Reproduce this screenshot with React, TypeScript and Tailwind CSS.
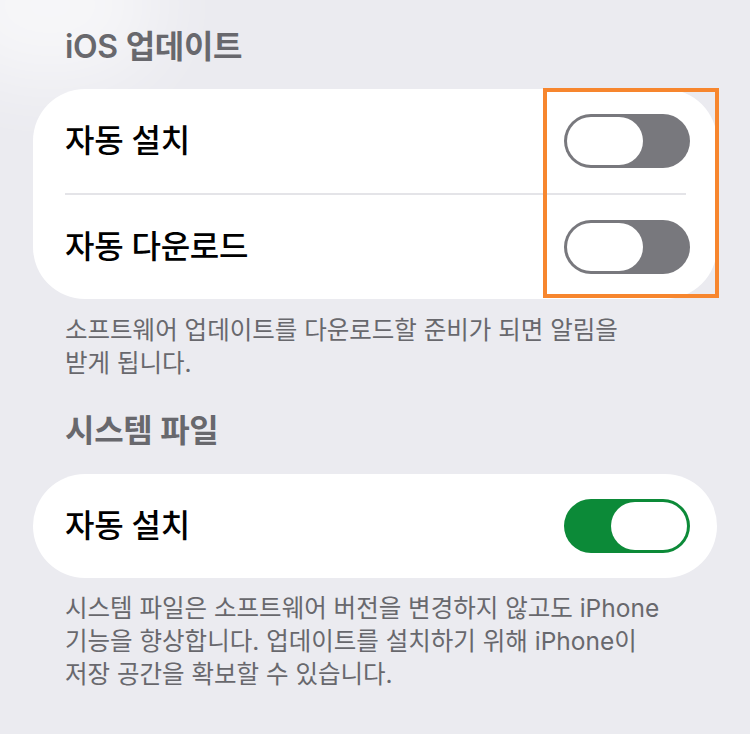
import React from 'react';

function Toggle({ on }: { on: boolean }) {
  return (
    <div
      className={`w-[126px] h-[54px] rounded-full p-[3px] flex ${on ? 'bg-[#0c8a38] justify-end' : 'bg-[#78787d] justify-start'}`}
    >
      <div className="w-[76px] h-full rounded-full bg-white" />
    </div>
  );
}

function Row({ label, on }: { label: string; on: boolean }) {
  return (
    <div className="h-[104px] flex items-center justify-between pl-[32px] pr-[27px]">
      <span className="text-[32px] font-medium text-black tracking-[-0.3px]">{label}</span>
      <Toggle on={on} />
    </div>
  );
}

export default function App() {
  return (
    <div className="relative min-h-[734px] w-[750px] overflow-hidden bg-[#ebebf0] font-['Inter','Noto_Sans_CJK_KR',sans-serif]">
      <div className="absolute -left-[60px] -top-[70px] w-[220px] h-[150px] rounded-full bg-white/60 blur-2xl" />

      <div className="relative px-[33px] pt-[27px] pb-[40px]">
        <h2 className="px-[32px] text-[32px] leading-[40px] font-semibold text-[#68686d] tracking-[-0.3px]">iOS 업데이트</h2>

        <div className="mt-[22px] bg-white rounded-[52px]">
          <Row label="자동 설치" on={false} />
          <div className="ml-[32px] mr-[31px] h-[2px] bg-[#e4e4e8]" />
          <Row label="자동 다운로드" on={false} />
        </div>

        <p className="mt-[15px] px-[32px] text-[24.5px] leading-[33px] text-[#68686d]">
          소프트웨어 업데이트를 다운로드할 준비가 되면 알림을
          <br />
          받게 됩니다.
        </p>

        <h2 className="mt-[31px] px-[32px] text-[32px] leading-[40px] font-semibold text-[#68686d] tracking-[-0.3px]">시스템 파일</h2>

        <div className="mt-[23px] bg-white rounded-[52px]">
          <Row label="자동 설치" on={true} />
        </div>

        <p className="mt-[14px] px-[32px] text-[24.5px] leading-[33px] text-[#68686d]">
          시스템 파일은 소프트웨어 버전을 변경하지 않고도 iPhone
          <br />
          기능을 향상합니다. 업데이트를 설치하기 위해 iPhone이
          <br />
          저장 공간을 확보할 수 있습니다.
        </p>
      </div>

      <div className="absolute left-[543px] top-[88px] w-[176px] h-[210px] border-4 border-[#f7862e]" />
    </div>
  );
}
